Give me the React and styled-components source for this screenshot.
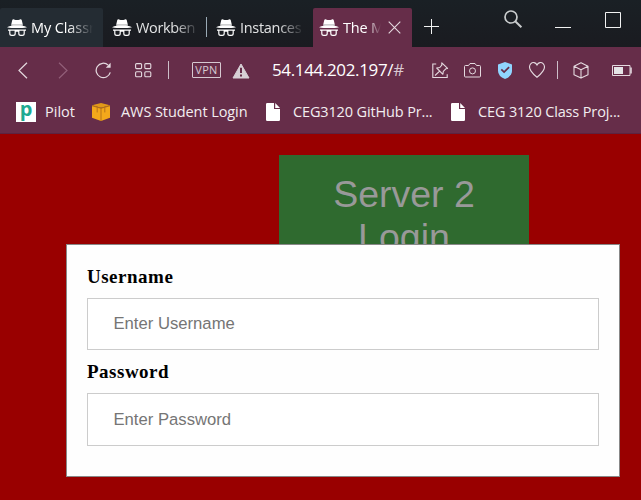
import React from "react";
import styled, { createGlobalStyle } from "styled-components";

const GlobalStyle = createGlobalStyle`
  body { margin: 0; overflow: hidden; background: #990000; }
  * { box-sizing: border-box; }
`;

const Window = styled.div`
  width: 641px;
  height: 500px;
  overflow: hidden;
  display: flex;
  flex-direction: column;
  font-family: "Open Sans", "Noto Sans", sans-serif;
  color: #f2edf0;
`;

const TabStrip = styled.div`
  height: 47px;
  flex: none;
  display: flex;
  align-items: flex-start;
  background: linear-gradient(#1a2025, #1a1b20);
`;

const Tab = styled.div`
  width: ${(p) => p.$width}px;
  height: 39px;
  margin-top: 8px;
  padding-left: ${(p) => p.$inset}px;
  display: flex;
  align-items: center;
  flex: none;
  border-radius: 2px 2px 0 0;
  background: ${(p) => p.$fill || "transparent"};
`;

const TabTitle = styled.span`
  width: ${(p) => p.$width}px;
  margin-left: 4px;
  overflow: hidden;
  white-space: nowrap;
  font-size: 14.5px;
  line-height: 22px;
  letter-spacing: ${(p) => p.$tracking || 0}px;
  color: ${(p) => (p.$bright ? "#ffffff" : "#e2e3e4")};
  mask-image: linear-gradient(to right, #000 ${(p) => p.$solid}%, transparent 100%);
`;

const Icon = styled.svg`
  display: block;
  flex: none;
  margin-left: ${(p) => p.$left || 0}px;
  margin-top: ${(p) => p.$top || 0}px;
  fill: none;
  stroke: ${(p) => p.$color || "#e4d9df"};
  stroke-width: ${(p) => p.$weight || 1};
`;

const Divider = styled.div`
  width: 1px;
  height: ${(p) => p.$height}px;
  margin-left: ${(p) => p.$left || 0}px;
  margin-top: ${(p) => p.$top || 0}px;
  flex: none;
  background: ${(p) => p.$color || "#cdbfc9"};
`;

const AddressBar = styled.div`
  height: 46px;
  flex: none;
  display: flex;
  align-items: center;
  background: #662d49;
`;

const VpnBadge = styled.div`
  width: 29px;
  height: 16px;
  margin-left: 23px;
  flex: none;
  border: 1px solid #d6c9d1;
  border-radius: 1px;
  font-size: 11px;
  line-height: 14px;
  letter-spacing: 0.3px;
  text-align: center;
  color: #d6c9d1;
`;

const Url = styled.span`
  width: 160px;
  margin-left: 22px;
  flex: none;
  white-space: nowrap;
  font-size: 17px;
  line-height: 24px;
  letter-spacing: -0.36px;
  color: #ffffff;
`;

const UrlPath = styled.span`
  color: #d9c9d2;
`;

const BookmarkBar = styled.div`
  height: 41px;
  padding-bottom: 3px;
  flex: none;
  display: flex;
  align-items: center;
  background: #662d49;
  border-bottom: 1px solid #5c2340;
`;

const BookmarkTitle = styled.span`
  width: ${(p) => p.$width}px;
  margin-left: ${(p) => p.$left}px;
  flex: none;
  white-space: nowrap;
  font-size: 14.5px;
  line-height: 22px;
  letter-spacing: ${(p) => p.$tracking || 0}px;
`;

const Page = styled.main`
  flex: 1;
  display: flex;
  flex-direction: column;
  padding: 21px 21px 0 66px;
  background: #990000;
`;

const Banner = styled.h1`
  width: 250px;
  height: 89px;
  margin: 0 0 0 213px;
  padding: 18px 40px 0;
  flex: none;
  overflow: hidden;
  background: #2f6a2f;
  color: #999999;
  font: 400 37.5px/43px "Liberation Sans", sans-serif;
  text-align: center;
`;

const LoginForm = styled.form`
  height: 233px;
  padding: 20px 20px 0;
  flex: none;
  display: flex;
  flex-direction: column;
  background: #fefefe;
  border: 1px solid #888888;
`;

const FieldLabel = styled.label`
  font: 700 19px/23px "Liberation Serif", serif;
  letter-spacing: 0.5px;
  color: #000000;
`;

const Field = styled.input`
  width: 100%;
  height: ${(p) => p.$height}px;
  margin: 10px 0 10px;
  padding: 0 25px 0 25.5px;
  flex: none;
  border: 1px solid #cccccc;
  border-radius: 0;
  background: #ffffff;
  outline: none;
  font: 400 16.67px "Liberation Sans", sans-serif;
  &::placeholder { color: #757575; opacity: 1; }
`;

function Incognito() {
  return (
    <Icon width="20" height="18" viewBox="0 0 20 18" $color="none">
      <path fill="#fff" d="M5.2 1.2C5.5.3 6.3.2 7 .5c2 .7 4 .7 6 0 .8-.3 1.5-.1 1.8.7L16 6.5H4zM0 8.2C3 6.8 6 6.2 10 6.2s7 .6 10 2c-3 .7-6 .8-10 .8s-7-.1-10-.8z" />
      <path d="M4 5.9h12" stroke="#5f6064" strokeWidth="0.5" />
      <path d="M2.8 11.2h5.4v3.2q0 1.9-1.9 1.9H4.7q-1.9 0-1.9-1.9zM11.8 11.2h5.4v3.2q0 1.9-1.9 1.9h-1.6q-1.9 0-1.9-1.9zM1 11.2h18M8 12.2h4" stroke="#fff" strokeWidth="1.2" />
    </Icon>
  );
}

function PageIcon({ left }) {
  return (
    <Icon width="14" height="18" viewBox="0 0 14 18" $left={left} $color="none">
      <path fill="#fff" d="M1.2 0H8v6h6v10.8q0 1.2-1.2 1.2H1.2Q0 18 0 16.8V1.2Q0 0 1.2 0zM9.2 0L14 5H9.2z" />
    </Icon>
  );
}

const PilotIcon = styled.div`
  width: 20px;
  height: 20px;
  margin-left: 16px;
  flex: none;
  background: #ffffff;
  color: #1eaa92;
  font: 700 20px/14px "Open Sans", sans-serif;
  text-align: center;
`;

export default function App() {
  return (
    <Window>
      <GlobalStyle />
      <TabStrip>
        <Tab $width={103} $inset={7} $fill="#242c33">
          <Incognito />
          <TabTitle $width={62} $solid={60} $bright $tracking={-0.1}>My Classr</TabTitle>
        </Tab>
        <Tab $width={103} $inset={9}>
          <Incognito />
          <TabTitle $width={63} $solid={62} $tracking={-0.35}>Workben</TabTitle>
        </Tab>
        <Divider $height={20} $top={17} $color="#9aaab5" />
        <Tab $width={106} $inset={9}>
          <Incognito />
          <TabTitle $width={64} $solid={60} $tracking={-0.3}>Instances</TabTitle>
        </Tab>
        <Tab $width={99} $inset={6} $fill="#662d49">
          <Incognito />
          <TabTitle $width={38} $solid={65} $bright $tracking={-0.2}>The M</TabTitle>
          <Icon width="13" height="13" viewBox="0 0 13 13" $left={7} $weight={1.1}>
            <path d="M.7.7l11.6 11.6M12.3.7L.7 12.3" />
          </Icon>
        </Tab>
        <Icon width="15" height="15" viewBox="0 0 15 15" $left={12} $top={19} $color="#f1f2f2">
          <path d="M7.5 0v15M0 7.5h15" />
        </Icon>
        <Icon width="20" height="19" viewBox="0 0 20 19" $left={64} $top={10} $color="#c9cccd" $weight={1.7}>
          <circle cx="8" cy="7" r="6" />
          <path d="M12.2 11.3l6.2 6" strokeWidth="2" />
        </Icon>
        <Icon width="16" height="1" viewBox="0 0 16 1" $left={32} $top={27} $color="#f1f2f2">
          <path d="M0 .5h16" />
        </Icon>
        <Icon width="16" height="16" viewBox="0 0 16 16" $left={34} $top={12} $color="#f1f2f2">
          <path d="M.5.5h15v15H.5z" />
        </Icon>
      </TabStrip>

      <AddressBar>
        <Icon width="10" height="17" viewBox="0 0 10 17" $left={18} $weight={1.2}>
          <path d="M9 .8L1 8.5l8 7.7" />
        </Icon>
        <Icon width="10" height="17" viewBox="0 0 10 17" $left={30} $color="#925f79" $weight={1.2}>
          <path d="M1 .8l8 7.7-8 7.7" />
        </Icon>
        <Icon width="17" height="17" viewBox="0 0 17 17" $left={27} $weight={1.25}>
          <path d="M13.2 3.1A7.2 7.2 0 1 0 15.3 10.4" />
          <path d="M15.6.8v4.9h-4.8z" fill="#e4d9df" stroke="none" />
        </Icon>
        <Icon width="17" height="15" viewBox="0 0 17 15" $left={23} $weight={1.1}>
          <rect x=".6" y=".6" width="6" height="5" rx="1" />
          <rect x="9.8" y=".6" width="6" height="5" rx="1" />
          <rect x=".6" y="8.8" width="6" height="5" rx="1" />
          <rect x="9.8" y="8.8" width="6" height="5" rx="1" />
        </Icon>
        <Divider $left={16} $height={18} />
        <VpnBadge>VPN</VpnBadge>
        <Icon width="18" height="16" viewBox="0 0 18 16" $left={11} $top={2}>
          <path d="M9 1l8 14H1z" fill="#d7d0d5" stroke="#d7d0d5" strokeLinejoin="round" />
          <path d="M9 4.7v5.2M9 11.4v2" stroke="#662d49" strokeWidth="2" />
        </Icon>
        <Url>54.144.202.197/<UrlPath>#</UrlPath></Url>
        <Icon width="17" height="17" viewBox="0 0 17 17" $weight={1.1}>
          <path d="M4.2 2H.8v13.5h14.4v-3.3" />
          <path d="M9.8.8l5.8 5.6-1.8.4-2.5 2.5-.4 3L4.7 6l3.1-.5 2-2.3zM7.7 9.1L3 13.5" strokeLinejoin="round" />
        </Icon>
        <Icon width="17" height="15" viewBox="0 0 17 15" $left={15}>
          <path d="M1.5 2.5h3l1.5-2h5l1.5 2h3q1 0 1 1v9.5q0 1-1 1h-14q-1 0-1-1V3.5q0-1 1-1z" />
          <circle cx="8.5" cy="7.9" r="3" />
        </Icon>
        <Icon width="14" height="17" viewBox="0 0 14 17" $left={17} $color="none">
          <path d="M7 0l7 2.6v6.2q0 5.5-7 8.2-7-2.7-7-8.2V2.6z" fill="#90d5ff" />
          <path d="M3.3 7.3l2.8 2.8 5-5" stroke="#662d49" strokeWidth="1.7" />
        </Icon>
        <Icon width="16" height="16" viewBox="0 0 16 16" $left={17} $weight={1.1}>
          <path d="M8 3C6.7.2 3.6-.1 1.9 1.7.1 3.6.4 6.7 2.1 9.1 3.5 11.2 5.7 13.4 8 15.2c2.3-1.8 4.5-4 5.9-6.1 1.7-2.4 2-5.5.2-7.4C12.4-.1 9.3.2 8 3z" />
        </Icon>
        <Divider $left={12} $height={18} />
        <Icon width="16" height="17" viewBox="0 0 16 17" $left={15} $weight={1.1}>
          <path d="M8 .8l7 3.4v8.5L8 16.1 1 12.7V4.2zM1 4.2l7 3.5 7-3.5M8 7.7v8.4" strokeLinejoin="round" />
        </Icon>
        <Icon width="20" height="11" viewBox="0 0 20 11" $left={23}>
          <path d="M.5.5h17.5v10H.5z" />
          <path d="M2 2h9v7H2z" fill="#e4e4e6" stroke="none" />
          <path d="M19 2.5v6" strokeWidth="1.6" />
        </Icon>
      </AddressBar>

      <BookmarkBar>
        <PilotIcon>p</PilotIcon>
        <BookmarkTitle $left={9} $width={31}>Pilot</BookmarkTitle>
        <Icon width="18" height="18" viewBox="0 0 18 18" $left={16} $color="none">
          <path fill="#f3a81b" d="M0 2.4L9 5l9-2.6v12.3L9 18l-9-3.3z" />
          <path fill="#e19918" d="M0 2.2L9 0l9 2.2-9 2.6z" />
          <path d="M0 2.8l9 2.5 9-2.5M9 5v13" stroke="#a66419" strokeWidth=".8" />
          <path d="M5.2 4.4v5M12.8 4.4v5" stroke="#a66419" strokeWidth=".8" />
        </Icon>
        <BookmarkTitle $left={11} $width={127} $tracking={-0.08}>AWS Student Login</BookmarkTitle>
        <PageIcon left={18} />
        <BookmarkTitle $left={13} $width={141} $tracking={-0.14}>CEG3120 GitHub Pr...</BookmarkTitle>
        <PageIcon left={17} />
        <BookmarkTitle $left={13} $width={144} $tracking={-0.14}>CEG 3120 Class Proj...</BookmarkTitle>
      </BookmarkBar>

      <Page>
        <Banner>Server 2 Login</Banner>
        <LoginForm>
          <FieldLabel htmlFor="username">Username</FieldLabel>
          <Field id="username" type="text" placeholder="Enter Username" $height={52} />
          <FieldLabel htmlFor="password">Password</FieldLabel>
          <Field id="password" type="password" placeholder="Enter Password" $height={53} />
        </LoginForm>
      </Page>
    </Window>
  );
}
